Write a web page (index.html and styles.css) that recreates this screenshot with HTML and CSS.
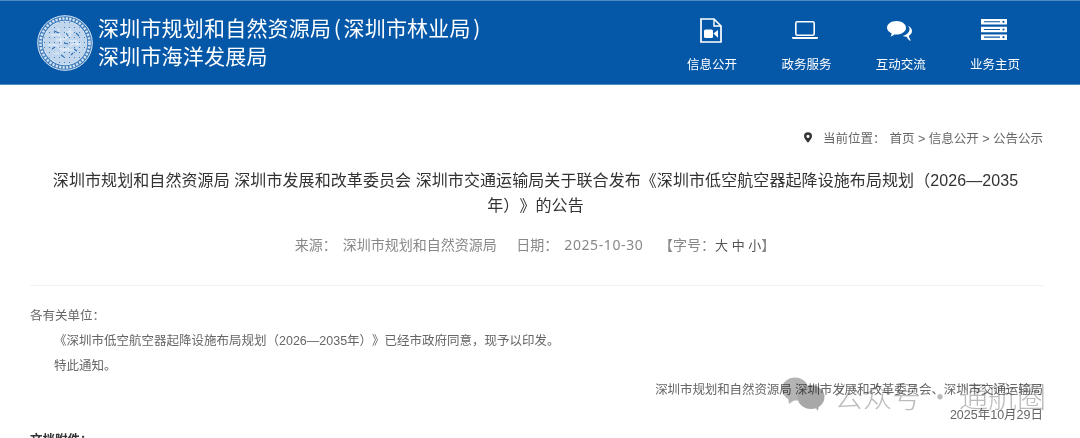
FILE: index.html
```html
<!DOCTYPE html>
<html lang="zh-CN">
<head>
<meta charset="utf-8">
<title>公告</title>
<link rel="stylesheet" href="styles.css">
</head>
<body>
<header class="top">
  <div class="brand">
    <svg class="seal" viewBox="0 0 56 56" width="56" height="56">
      <defs>
        <pattern id="tex" width="5" height="5" patternUnits="userSpaceOnUse">
          <rect width="5" height="5" fill="#a8c5e5"/>
          <path d="M0 1h3M4 0v3M1 2v3M2 4h3" stroke="#e6eff8" stroke-width=".8"/>
          <path d="M2 2h1v1H2z" fill="#3f7fc0"/>
        </pattern>
      </defs>
      <circle cx="28" cy="28" r="27.300" fill="#3c7cbd" stroke="#dbe7f4" stroke-width="1"/>
      <circle cx="28" cy="28" r="24.500" fill="none" stroke="#d5e3f2" stroke-width="2.600" stroke-dasharray="2.200 1.300"/>
      <circle cx="28" cy="28" r="21.800" fill="url(#tex)" stroke="#e6eff8" stroke-width=".8"/>
      <path d="M14 20h9v4h6v-7h7M11 30h9l3 4h8l4-5h9M16 38h7l3-3h11M22 12v8M33 13v9M19 25h5v5M32 26h8v5" fill="none" stroke="#eaf2fa" stroke-width="1"/>
      <path d="M17 16l5 2M39 18l3 3M15 34l3-2M27 28l4 1M29 18l2 3M37 34l3 2M24 40l3 2M34 40l2-2" stroke="#2a6db4" stroke-width="1.100"/>
    </svg>
    <div class="brand-name">
      <div>深圳市规划和自然资源局<span class="paren">(</span>深圳市林业局<span class="paren">)</span></div>
      <div>深圳市海洋发展局</div>
    </div>
  </div>
  <nav class="nav">
    <a class="nav-item">
      <svg viewBox="0 0 22 26" width="22" height="26"><path d="M1 2h13l7 7v16H1z" fill="none" stroke="#fff" stroke-width="1.700"/><path d="M14 2v7h7" fill="none" stroke="#fff" stroke-width="1.400"/><rect x="4" y="12.500" width="9" height="8.500" rx="1.500" fill="#fff"/><path d="M13.500 16.500l4.500-3.600v7.800z" fill="#fff"/></svg>
      <span>信息公开</span>
    </a>
    <a class="nav-item">
      <svg viewBox="0 0 26 26" width="26" height="26"><rect x="3.800" y="4.800" width="18.400" height="13.500" rx="1.500" fill="none" stroke="#fff" stroke-width="1.600"/><path d="M0 20h26v.5a1.500 1.500 0 0 1-1.500 1.500h-23A1.500 1.500 0 0 1 0 20.500z" fill="#fff"/></svg>
      <span>政务服务</span>
    </a>
    <a class="nav-item">
      <svg viewBox="0 0 25 26" width="25" height="26"><path d="M9.500 4c5.200 0 9.500 2.900 9.500 6.800s-4.300 6.800-9.500 6.800c-.8 0-1.500-.1-2.200-.2-1.100 1.100-2.400 1.800-3.800 2 .7-.9 1.100-1.900 1.200-3C2 15.200 0 13.200 0 10.800 0 6.900 4.300 4 9.500 4z" fill="#fff"/><path d="M20.400 8.500c2.700 1 4.600 3.100 4.600 5.500 0 2-1.200 3.700-3.100 4.800.1 1.400.5 2.500 1.300 3.400l.3 2c-1.700-1-3.100-2.800-3.800-4.400-1.400 0-2.800-.3-4-.8 3.700-.9 6.800-3.600 6.800-7 0-1.300-.9-2.700-2.100-3.500z" fill="#fff"/></svg>
      <span>互动交流</span>
    </a>
    <a class="nav-item">
      <svg viewBox="0 0 26 26" width="26" height="26"><path fill="#fff" d="M0 2h26v5.500H0zM0 9.700h26v5.500H0zM0 17.400h26v5.500H0z"/><path fill="#0558a8" d="M3 4.200h16v1.100H3zM3 11.900h16v1.100H3zM3 19.600h16v1.100H3z"/><circle fill="#0558a8" cx="22.500" cy="4.800" r="1.100"/><circle fill="#0558a8" cx="22.500" cy="12.500" r="1.100"/><circle fill="#0558a8" cx="22.500" cy="20.200" r="1.100"/></svg>
      <span>业务主页</span>
    </a>
  </nav>
</header>
<main class="page">
  <div class="crumbs">
    <svg class="pin" viewBox="0 0 10 13" width="8" height="11"><path fill-rule="evenodd" d="M5 0a5 5 0 0 1 5 5c0 3-3 5.500-5 8-2-2.500-5-5-5-8a5 5 0 0 1 5-5zm0 3a2 2 0 1 0 0 4 2 2 0 0 0 0-4z" fill="#333"/></svg>
    <span class="crumbs-label">当前位置：</span>
    <span>首页 &gt; 信息公开 &gt; 公告公示</span>
  </div>
  <h1 class="title">深圳市规划和自然资源局 深圳市发展和改革委员会 深圳市交通运输局关于联合发布《深圳市低空航空器起降设施布局规划（2026—2035年）》的公告</h1>
  <div class="meta">
    <span>来源：</span><span class="meta-val">深圳市规划和自然资源局</span>
    <span class="meta-gap">日期：</span><span class="meta-val meta-date">2025-10-30</span>
    <span class="meta-size">【字号：<b>大</b> <b>中</b> <b>小</b>】</span>
  </div>
  <article class="body">
    <p class="line">各有关单位：</p>
    <p class="line lead">《深圳市低空航空器起降设施布局规划（2026—2035年）》已经市政府同意，现予以印发。</p>
    <p class="line notice">特此通知。</p>
    <p class="line sign sign-org">深圳市规划和自然资源局 深圳市发展和改革委员会、深圳市交通运输局</p>
    <p class="line sign">2025年10月29日</p>
    <p class="line attach">文档附件：</p>
  </article>
</main>
<div class="mark">
  <svg class="mark-icon" viewBox="0 0 43 34" width="43" height="34"><ellipse cx="13" cy="12" rx="13" ry="11.500" fill="#b4b4b4"/><path d="M6 20l1 7 7-5z" fill="#b4b4b4"/><ellipse cx="29" cy="20" rx="13.500" ry="12" fill="#a8a8a8"/><path d="M33 30l3 4 1-7z" fill="#a8a8a8"/></svg>
  <span>公众号</span>
  <span class="mark-dot">·</span>
  <span>通航圈</span>
</div>
</body>
</html>
```
FILE: styles.css
```css
* { box-sizing: border-box; }
html, body { margin: 0; height: 438px; overflow: hidden; background: #fff; }
body { font-family: "Liberation Sans", "Noto Sans CJK SC", sans-serif; color: #666; position: relative; text-spacing-trim: space-all; }
.top {
  height: 85px;
  background: #0558a8;
  border-top: 1px solid #4d8ac6;
  border-bottom: 1px solid #4d8ac6;
  display: flex;
  justify-content: space-between;
  padding: 0 60px 0 37px;
}
.brand { display: flex; align-items: center; gap: 5px; }
.seal { flex: none; }
.brand-name {
  color: #fff;
  font-family: "Noto Sans CJK SC", sans-serif;
  font-size: 21px;
  line-height: 28px;
  font-weight: 400;
  letter-spacing: .2px;
  margin-top: -4px;
}
.paren { margin: 0 2.500px; }
.nav { display: flex; gap: 44.300px; }
.nav-item {
  width: 50px;
  display: flex;
  flex-direction: column;
  align-items: center;
  color: #fff;
  font-family: "Noto Sans CJK SC", sans-serif;
  font-size: 12.500px;
  padding-top: 16px;
  gap: 11px;
  white-space: nowrap;
  font-weight: 400;
}
.nav-item svg { margin-left: -3px; }
.page { padding: 0 37px 0 30px; }
.crumbs {
  margin-top: 44px;
  height: 16px;
  display: flex;
  align-items: center;
  justify-content: flex-end;
  font-size: 12.500px;
  color: #666;
}
.pin { margin-right: 11px; }
.crumbs-label { margin-right: 4px; }
.title {
  margin: 23px 21px 0 19px;
  font-size: 16px;
  line-height: 25px;
  font-weight: 400;
  letter-spacing: .08px;
  color: #333;
  text-align: center;
}
.meta {
  margin-top: 15px;
  height: 24px;
  padding-right: 3px;
  font-family: "Noto Sans", "Noto Sans CJK SC", sans-serif;
  font-size: 14px;
  line-height: 24px;
  color: #888;
  text-align: center;
}
.meta-val { margin-left: 6px; }
.meta-date { letter-spacing: .6px; }
.meta-gap { margin-left: 16px; }
.meta-size { margin-left: 12px; }
.meta-size b { font-weight: 400; font-size: 13px; color: #555; }
.body {
  margin-top: 28px;
  border-top: 1px solid #f2f2f2;
  padding-top: 18px;
  font-size: 12.500px;
  color: #666;
}
.line { margin: 0; line-height: 24.800px; }
.lead { text-indent: 24px; }
.notice { padding-left: 24px; }
.sign { text-align: right; }
.sign-org { letter-spacing: -.1px; }
.attach { font-weight: 700; color: #333; }
.mark {
  position: absolute;
  left: 782px;
  top: 377px;
  display: flex;
  align-items: flex-start;
  font-family: "Noto Sans CJK SC", sans-serif;
  font-size: 29px;
  line-height: 36px;
  font-weight: 300;
  color: rgba(120,120,120,.5);
  white-space: nowrap;
  mix-blend-mode: multiply;
}
.mark-icon { margin-right: 9px; }
.mark-dot { width: 38px; text-align: center; }
```
